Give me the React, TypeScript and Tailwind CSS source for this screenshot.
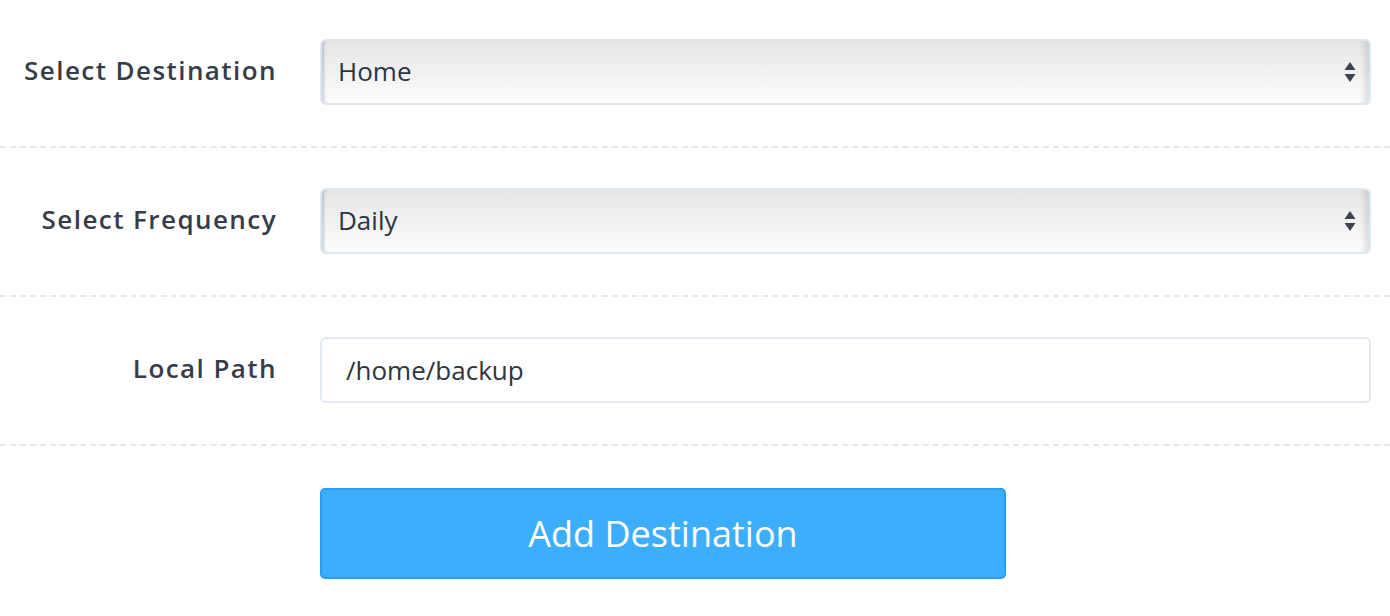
import React from 'react';

const Arrows = () => (
  <svg width="12" height="22" viewBox="0 0 12 22" className="text-[#3b4350]">
    <path d="M6 1 L11.5 9 H0.5 Z" fill="currentColor" />
    <path d="M6 21 L11.5 13 H0.5 Z" fill="currentColor" />
  </svg>
);

const SelectBox = ({ value }: { value: string }) => (
  <div className="relative flex h-[66px] flex-1 items-center rounded-[6px] border-2 border-[#dfe7f1] bg-gradient-to-b from-[#e6e6e6] via-[#f1f1f1] to-[#fdfdfd] pl-4 shadow-[inset_4px_0_3px_-2px_rgba(0,0,0,0.18),inset_-10px_0_6px_-6px_rgba(0,0,0,0.12)]">
    <span className="-mt-[2px] text-[26px] text-[#2e3440]">{value}</span>
    <div className="absolute right-[13px] top-1/2 -translate-y-1/2">
      <Arrows />
    </div>
  </div>
);

const Row = ({ label, children, first }: { label: string; children: React.ReactNode; first?: boolean }) => (
  <div className={`flex items-center border-b-2 border-dashed border-[#e3e9f2] pb-[41px] ${first ? 'pt-[39px]' : 'pt-[40px]'}`}>
    <div className="-mt-[4px] w-[277px] shrink-0 text-right text-[26px] font-semibold tracking-[0.055em] text-[#363d48]">{label}</div>
    <div className="ml-[43px] mr-[19px] flex flex-1">{children}</div>
  </div>
);

export default function App() {
  return (
    <div className="h-[616px] w-[1390px] overflow-hidden bg-white" style={{ fontFamily: '"Open Sans", sans-serif' }}>
      <Row label="Select Destination" first>
        <SelectBox value="Home" />
      </Row>
      <Row label="Select Frequency">
        <SelectBox value="Daily" />
      </Row>
      <Row label="Local Path">
        <div className="flex h-[66px] flex-1 items-center rounded-[6px] border-2 border-[#e3e9f2] bg-white pl-[24px]">
          <span className="text-[26px] text-[#2e3440]">/home/backup</span>
        </div>
      </Row>
      <div className="pl-[320px] pt-[42px]">
        <button className="flex h-[91px] w-[686px] items-center justify-center rounded-[5px] border-2 border-[#2a9df2] bg-[#3daefc] text-[36px] text-white">
          Add Destination
        </button>
      </div>
    </div>
  );
}
